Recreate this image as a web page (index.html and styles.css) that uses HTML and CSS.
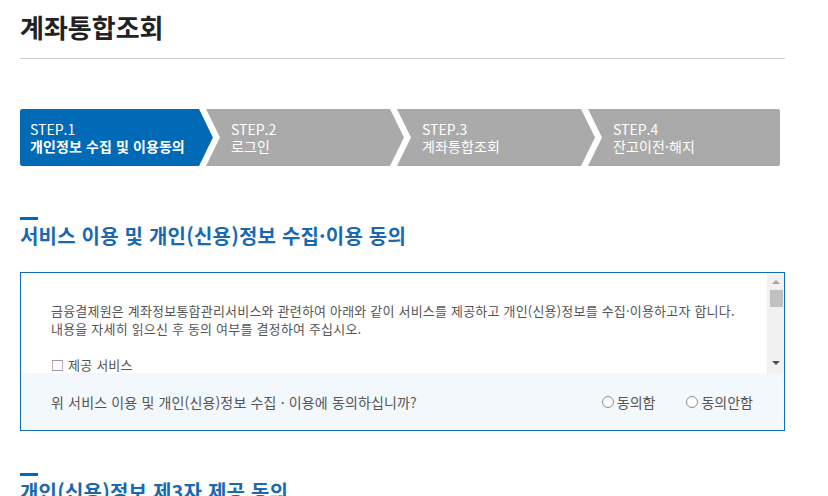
FILE: index.html
```html
<!DOCTYPE html>
<html lang="ko">
<head>
<meta charset="utf-8">
<title>계좌통합조회</title>
<link rel="stylesheet" href="styles.css">
</head>
<body>
<div class="page">
  <h1 class="page-title">계좌통합조회</h1>

  <ol class="steps">
    <li class="step active"><span class="step-no">STEP.1</span><span class="step-name">개인정보 수집 및 이용동의</span></li>
    <li class="step"><span class="step-no">STEP.2</span><span class="step-name">로그인</span></li>
    <li class="step"><span class="step-no">STEP.3</span><span class="step-name">계좌통합조회</span></li>
    <li class="step last"><span class="step-no">STEP.4</span><span class="step-name">잔고이전·해지</span></li>
  </ol>

  <h2 class="section-title">서비스 이용 및 개인(신용)정보 수집·이용 동의</h2>
  <div class="agree-box">
    <div class="terms">
      <div class="terms-text">
        <p>금융결제원은 계좌정보통합관리서비스와 관련하여 아래와 같이 서비스를 제공하고 개인(신용)정보를 수집·이용하고자 합니다.<br>내용을 자세히 읽으신 후 동의 여부를 결정하여 주십시오.</p>
        <p>□ 제공 서비스</p>
        <p>- 계좌정보통합관리서비스</p>
      </div>
      <div class="scrollbar">
        <span class="arrow up"></span>
        <span class="thumb"></span>
        <span class="track"></span>
        <span class="arrow down"></span>
      </div>
    </div>
    <div class="agree-row">
      <span class="question">위 서비스 이용 및 개인(신용)정보 수집 · 이용에 동의하십니까?</span>
      <div class="choices">
        <label class="choice"><input type="radio" name="agree1">동의함</label>
        <label class="choice"><input type="radio" name="agree1">동의안함</label>
      </div>
    </div>
  </div>

  <h2 class="section-title second">개인(신용)정보 제3자 제공 동의</h2>
</div>
</body>
</html>
```

FILE: styles.css
```css
* { box-sizing: border-box; }
html, body { margin: 0; padding: 0; background: #fff; }
body {
  font-family: "Noto Sans CJK KR", "Noto Sans", "Liberation Sans", sans-serif;
  color: #555;
  overflow: hidden;
}
.page {
  width: 765px;
  margin-left: 20px;
}
.page-title {
  margin: 0;
  padding: 12px 0 16px;
  font-size: 26px;
  line-height: 30px;
  font-weight: 700;
  color: #222;
  border-bottom: 1px solid #cfcfcf;
}

/* steps */
.steps {
  list-style: none;
  margin: 50px 0 0;
  padding: 0;
  width: 760px;
  height: 57px;
  display: flex;
  background: #aaaaaa;
  border-radius: 3px;
  overflow: hidden;
}
.step {
  position: relative;
  width: 191px;
  padding: 12px 0 0 25px;
  background: #aaaaaa;
  color: #fff;
  display: flex;
  flex-direction: column;
  font-size: 14px;
  line-height: 17px;
}
.step.active {
  width: 186px;
  padding-left: 10px;
  background: #006ab6;
}
.step.last { flex: 1; }
.step:not(.last)::before {
  content: "";
  position: absolute;
  z-index: 1;
  top: 0;
  left: calc(100% - 7px);
  width: 14px;
  height: 100%;
  background: inherit;
  clip-path: polygon(0 0, 14px 50%, 0 100%);
}
.step:not(.last)::after {
  content: "";
  position: absolute;
  z-index: 2;
  top: 0;
  left: calc(100% - 7px);
  width: 21px;
  height: 100%;
  background: #fff;
  clip-path: polygon(0 0, 7px 0, 21px 50%, 7px 100%, 0 100%, 14px 50%);
}
.step-name { letter-spacing: 0.1px; }
.step.active .step-name { font-weight: 700; }

/* section title */
.section-title {
  margin: 51px 0 0;
  font-size: 20px;
  line-height: 24px;
  font-weight: 700;
  color: #1a69b0;
  letter-spacing: 0.2px;
}
.section-title::before {
  content: "";
  display: block;
  width: 18px;
  height: 3px;
  margin-bottom: 4px;
  background: #006ab6;
}
.section-title.second { margin-top: 42px; }

/* agree box */
.agree-box {
  margin-top: 24px;
  border: 1px solid #116db7;
}
.terms {
  display: flex;
  height: 100px;
}
.terms-text {
  flex: 1;
  overflow: hidden;
  padding: 29px 20px 0 30px;
  font-size: 13px;
  line-height: 18px;
  letter-spacing: 0.2px;
  color: #555;
}
.terms-text p { margin: 0 0 18px; }
.scrollbar {
  width: 17px;
  background: #f1f1f1;
  display: flex;
  flex-direction: column;
  align-items: center;
}
.arrow {
  width: 0;
  height: 0;
  border-left: 4px solid transparent;
  border-right: 4px solid transparent;
}
.arrow.up {
  margin-top: 7px;
  border-bottom: 4px solid #a3a3a3;
}
.thumb {
  margin-top: 6px;
  width: 13px;
  height: 17px;
  background: #c1c1c1;
  margin-left: 1px;
}
.track { flex: 1; }
.arrow.down {
  margin-bottom: 8px;
  border-top: 4px solid #505050;
}
.agree-row {
  height: 57px;
  background: #f2f8fc;
  display: flex;
  align-items: center;
  justify-content: space-between;
  padding: 0 31px 0 30px;
  font-size: 14px;
  letter-spacing: 0.15px;
  color: #555;
}
.choices {
  display: flex;
  gap: 31px;
}
.choice {
  display: flex;
  align-items: center;
  gap: 3px;
  letter-spacing: 0;
}
.choice input {
  appearance: none;
  -webkit-appearance: none;
  margin: 0;
  width: 12px;
  height: 12px;
  border: 1px solid #8d8d8d;
  border-radius: 50%;
  background: #fff;
}
```
